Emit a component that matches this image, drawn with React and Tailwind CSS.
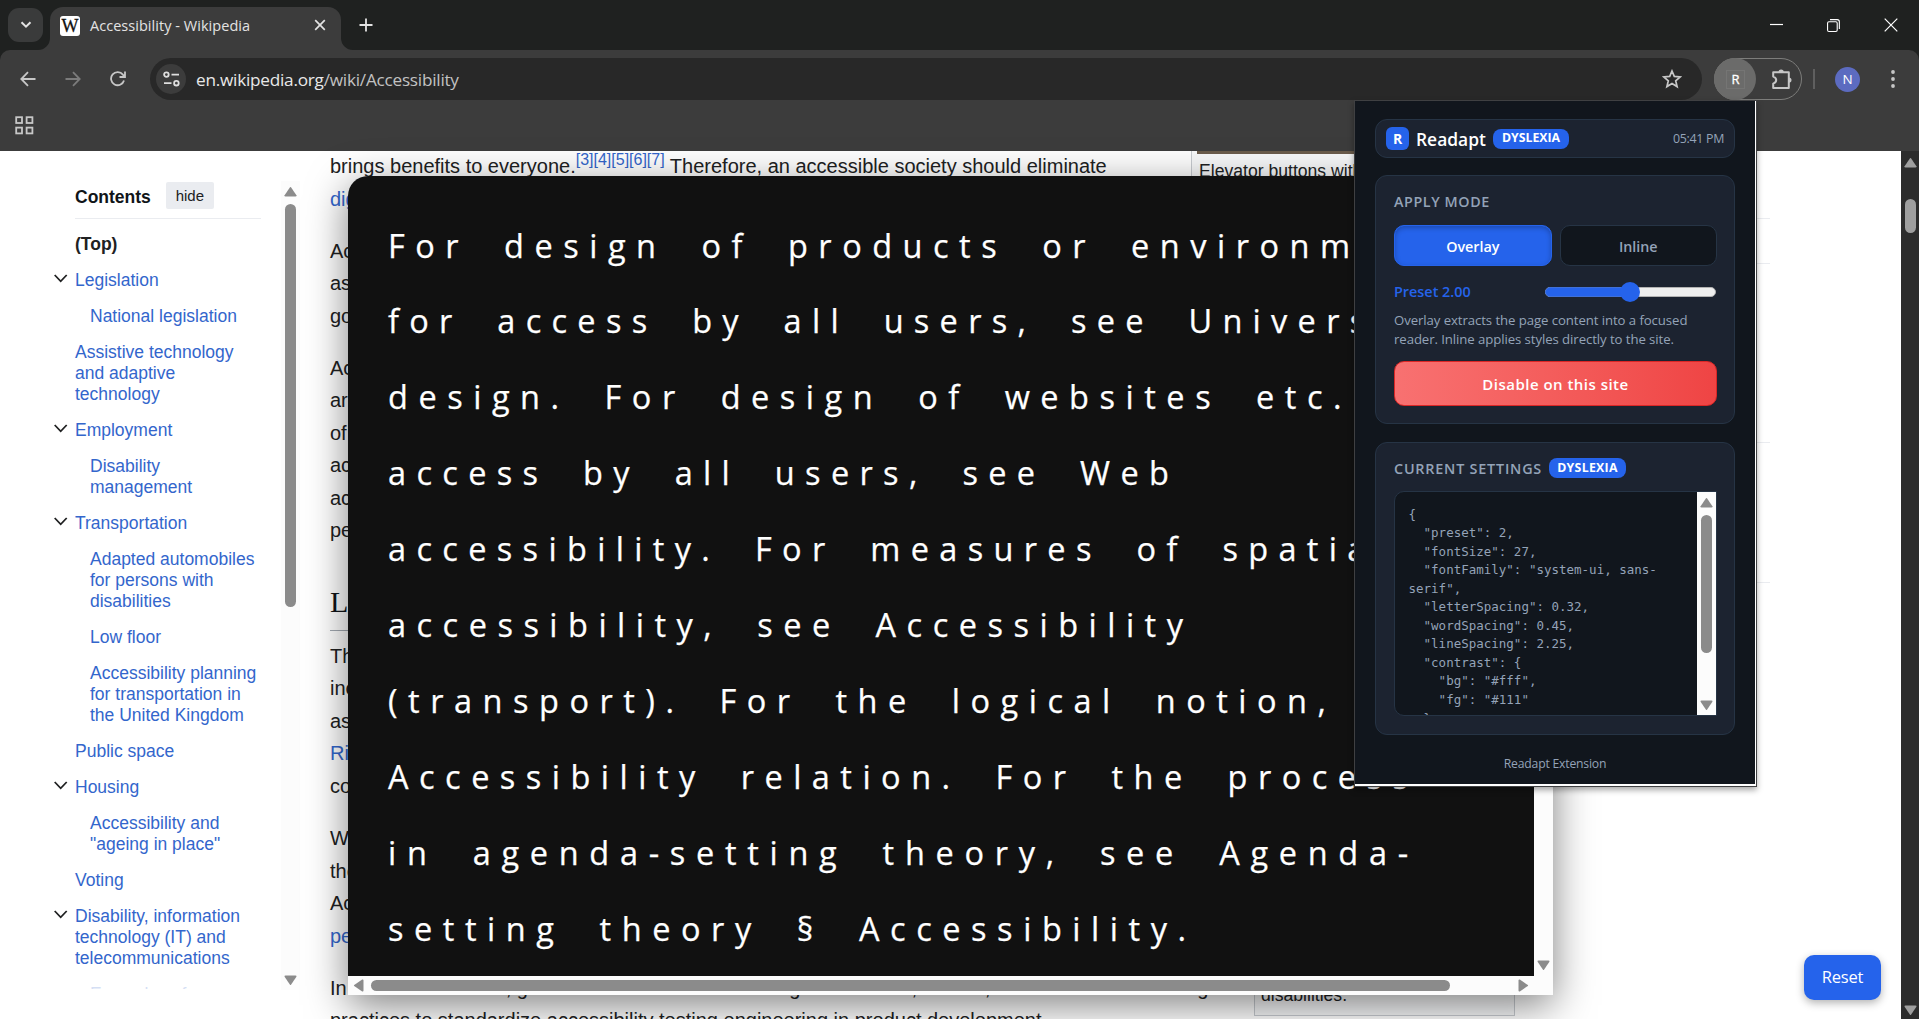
import React from "react";

const UI = "font-['Open_Sans','Noto_Sans',sans-serif]";
const ARIAL = "font-['Liberation_Sans',Arial,sans-serif]";

function Arrow({ dir, className = "" }) {
  const d = {
    up: "M7 2.2 L12.4 10.2 Q12.8 11.4 11.4 11.5 L1.6 11.5 Q.2 11.4 .6 10.2 L6 2.2 Q6.5 1.6 7 2.2Z",
    down: "M7 10.8 L12.4 2.8 Q12.8 1.6 11.4 1.5 L1.6 1.5 Q.2 1.6 .6 2.8 L6 10.8 Q6.5 11.4 7 10.8Z",
    left: "M2.2 6 L10.2 .6 Q11.4 .2 11.5 1.6 L11.5 11.4 Q11.4 12.8 10.2 12.4 L2.2 7 Q1.6 6.5 2.2 6Z",
    right: "M10.8 6 L2.8 .6 Q1.6 .2 1.5 1.6 L1.5 11.4 Q1.6 12.8 2.8 12.4 L10.8 7 Q11.4 6.5 10.8 6Z",
  }[dir];
  return (
    <svg viewBox="0 0 13 13" className={`size-[13px] shrink-0 ${className}`} fill="currentColor">
      <path d={d} />
    </svg>
  );
}

function TabStrip() {
  return (
    <div className="flex h-[50px] shrink-0 bg-[#1f2120] pl-2">
      <div className="mt-2 flex h-[34px] w-[35px] items-center justify-center rounded-[11px] bg-[#3a3b3b]">
        <svg viewBox="0 0 12 8" className="h-2 w-3" fill="none" stroke="#e3e3e3" strokeWidth="2">
          <path d="M1.5 1.2 L6 5.7 L10.5 1.2" />
        </svg>
      </div>
      <div className="relative ml-[7px] mt-[7px] flex h-[43px] w-[291px] items-center rounded-t-[13px] bg-[#3c3c3c] pb-[6px] pl-[10px]">
        <svg viewBox="0 0 12 12" className="absolute -left-3 bottom-0 size-3" fill="#3c3c3c">
          <path d="M12 0 V12 H0 A12 12 0 0 0 12 0Z" />
        </svg>
        <svg viewBox="0 0 12 12" className="absolute -right-3 bottom-0 size-3" fill="#3c3c3c">
          <path d="M0 0 V12 H12 A12 12 0 0 1 0 0Z" />
        </svg>
        <div className="flex size-5 items-center justify-center rounded-[3px] bg-white font-['Liberation_Serif',serif] text-[18px] leading-none text-[#111] [-webkit-text-stroke:0.3px_#111]">
          W
        </div>
        <span className={`ml-[10px] text-[14.5px] tracking-[0.04px] text-[#e3e3e3] ${UI}`}>Accessibility - Wikipedia</span>
        <svg viewBox="0 0 12 12" className="absolute left-[264px] top-[12px] size-3" stroke="#e3e3e3" strokeWidth="1.7">
          <path d="M1.2 1.2 L10.8 10.8 M10.8 1.2 L1.2 10.8" />
        </svg>
      </div>
      <svg viewBox="0 0 14 14" className="ml-[18px] mt-[18px] size-[14px]" stroke="#e3e3e3" strokeWidth="1.8">
        <path d="M7 .5 V13.5 M.5 7 H13.5" />
      </svg>
      <div className="ml-auto flex h-[50px] items-center gap-[44px] pr-[21px]">
        <svg viewBox="0 0 14 14" className="size-[14px]" stroke="#fff" strokeWidth="1.2">
          <path d="M1 6.5 H14" />
        </svg>
        <svg viewBox="0 0 14 14" className="size-[13px]" fill="none" stroke="#fff" strokeWidth="1.2">
          <rect x=".6" y="3" width="10.4" height="10.4" rx="1.5" />
          <path d="M3.2 .7 H11 Q13.3 .7 13.3 3 V10.8" />
        </svg>
        <svg viewBox="0 0 14 14" className="size-[14px]" stroke="#fff" strokeWidth="1.2">
          <path d="M.7 .7 L13.3 13.3 M13.3 .7 L.7 13.3" />
        </svg>
      </div>
    </div>
  );
}

function Toolbar() {
  return (
    <div className="h-[101px] shrink-0 bg-[#1f2120]">
      <div className="flex h-[101px] flex-col rounded-t-[10px] bg-[#3c3c3c]">
        <div className="flex h-[58px] items-center pl-5">
          <svg viewBox="0 0 16 16" className="size-4" fill="none" stroke="#c7c7c7" strokeWidth="1.8">
            <path d="M15.5 8 H1.5 M8 1.2 L1.3 8 L8 14.8" />
          </svg>
          <svg viewBox="0 0 16 16" className="ml-[29px] size-4" fill="none" stroke="#7b7b7b" strokeWidth="1.8">
            <path d="M.5 8 H14.5 M8 1.2 L14.7 8 L8 14.8" />
          </svg>
          <svg viewBox="0 0 16 16" className="ml-[29px] size-4" fill="none" stroke="#c7c7c7" strokeWidth="1.8">
            <path d="M14 9.5 A6.6 6.6 0 1 1 12.9 3.6 L14.6 5.6 M15 .5 V6 H9.5" />
          </svg>
          <div className="ml-6 flex h-[42px] w-[1552px] items-center rounded-full bg-[#282828] pl-1.5">
            <div className="flex size-[30px] items-center justify-center rounded-full bg-[#3c3c3c]">
              <svg viewBox="0 0 17 16" className="h-4 w-[17px]" fill="none" stroke="#dedede" strokeWidth="1.8">
                <circle cx="3.4" cy="3.6" r="2.3" />
                <path d="M8.5 3.6 H16 M1 12.2 H8.5" />
                <circle cx="13.4" cy="12.2" r="2.3" />
              </svg>
            </div>
            <span className={`ml-[10px] pt-[2px] text-[17.2px] tracking-[-0.24px] text-[#e8e8e8] ${UI}`}>
              en.wikipedia.org<span className="text-[#c2c2c2]">/wiki/Accessibility</span>
            </span>
            <svg viewBox="0 0 20 20" className="ml-auto mr-5 size-5" fill="none" stroke="#c7c7c7" strokeWidth="1.7">
              <path d="M10 2 L12.3 7.4 L18.2 7.9 L13.7 11.8 L15.1 17.6 L10 14.5 L4.9 17.6 L6.3 11.8 L1.8 7.9 L7.7 7.4Z" />
            </svg>
          </div>
          <div className="ml-3 flex h-[42px] w-[88px] items-center rounded-full border border-[#7d7d7b]">
            <div className={`-ml-px flex size-[42px] shrink-0 items-center justify-center rounded-full bg-[#6b6b6a] text-[13px] text-white ${UI}`}>
              <span className="ml-px flex size-[19px] items-center justify-center border border-[#757574] pt-px [-webkit-text-stroke:0.3px_white]">R</span>
            </div>
            <svg viewBox="0 0 22 22" className="ml-[15px] size-[22px]" fill="none" stroke="#c7c7c7" strokeWidth="2">
              <path d="M2.2 4.2 H17.8 V20 H2.2 V15.6 Q5.2 14.6 5.2 12.1 Q5.2 9.6 2.2 8.6Z" strokeLinejoin="round" />
              <path d="M7.4 4.2 A2.7 2.7 0 0 1 12.8 4.2Z M17.8 9.4 A2.7 2.7 0 0 1 17.8 14.8Z" fill="#c7c7c7" stroke="none" />
            </svg>
          </div>
          <div className="ml-[11px] h-5 w-[2px] bg-[#5f5f5f]" />
          <div className={`ml-5 flex size-[25px] items-center justify-center rounded-full bg-[#5c6bc0] text-[13.5px] text-white ${UI}`}>N</div>
          <svg viewBox="0 0 4 18" className="ml-[31px] h-[18px] w-1" fill="#c7c7c7">
            <circle cx="2" cy="2" r="1.9" />
            <circle cx="2" cy="9" r="1.9" />
            <circle cx="2" cy="16" r="1.9" />
          </svg>
        </div>
        <svg viewBox="0 0 19 19" className="ml-[15px] mt-2 size-[19px]" fill="none" stroke="#c7c7c7" strokeWidth="1.8">
          <rect x="1.2" y="1.2" width="5.8" height="5.8" />
          <rect x="11.6" y="1.2" width="5.8" height="5.8" />
          <rect x="1.2" y="11.6" width="5.8" height="5.8" />
          <rect x="11.6" y="11.6" width="5.8" height="5.8" />
        </svg>
      </div>
    </div>
  );
}

const TOC = [
  { t: ["Legislation"], open: true },
  { t: ["National legislation"], sub: true },
  { t: ["Assistive technology", "and adaptive", "technology"] },
  { t: ["Employment"], open: true },
  { t: ["Disability", "management"], sub: true },
  { t: ["Transportation"], open: true },
  { t: ["Adapted automobiles", "for persons with", "disabilities"], sub: true },
  { t: ["Low floor"], sub: true },
  { t: ["Accessibility planning", "for transportation in", "the United Kingdom"], sub: true },
  { t: ["Public space"] },
  { t: ["Housing"], open: true },
  { t: ["Accessibility and", "\"ageing in place\""], sub: true },
  { t: ["Voting"] },
  { t: ["Disability, information", "technology (IT) and", "telecommunications"], open: true },
  { t: ["Examples of"], sub: true, faded: true },
];

function Contents() {
  return (
    <div className="flex h-[839px] w-[300px] shrink-0 overflow-hidden pt-[30px]">
      <div className="h-[808px] w-[281px] overflow-hidden pl-[54px]">
        <div className="ml-[21px] flex h-[38px] w-[186px] items-start border-b border-[#eaecf0]">
          <span className="mt-[6px] text-[17.5px] leading-[21px] font-bold text-[#101418]">Contents</span>
          <span className="ml-[15px] mt-[1px] flex h-[27px] w-12 items-center justify-center rounded-[2px] bg-[#eaecf0] pt-px text-[15px] text-[#202122]">hide</span>
        </div>
        <div className="pt-[7px] text-[17.5px] leading-[21px] whitespace-nowrap text-[#3366cc]">
          <div className="py-[7.5px] pl-[21px] font-bold text-[#202122]">(Top)</div>
          {TOC.map((item, i) => (
            <div key={i} className="flex py-[7.5px]">
              <div className={item.sub ? "w-9 shrink-0" : "w-[21px] shrink-0"}>
                {item.open && (
                  <svg viewBox="0 0 14 9" className="mt-[4px] h-[9px] w-[14px]" fill="none" stroke="#202122" strokeWidth="1.8">
                    <path d="M.7 1 L6.7 7.3 L12.7 1" />
                  </svg>
                )}
              </div>
              <div className={item.faded ? "opacity-20" : ""}>
                {item.t.map((line) => (
                  <div key={line}>{line}</div>
                ))}
              </div>
            </div>
          ))}
        </div>
      </div>
      <div className="flex w-[19px] flex-col items-center bg-[#fcfcfc] text-[#8b8b8b]">
        <Arrow dir="up" className="mt-[4px]" />
        <div className="mt-[6px] h-[403px] w-[11px] rounded-full bg-[#8b8b8b]" />
        <Arrow dir="down" className="mt-auto mb-[3px]" />
      </div>
    </div>
  );
}

function Lines({ items, className = "" }) {
  return (
    <p className={`mb-[19.7px] ${className}`}>
      {items.map((l, i) => (
        <span key={i} className="block whitespace-nowrap">{l}</span>
      ))}
    </p>
  );
}

const Link = ({ children }) => <span className="text-[#3366cc]">{children}</span>;

function Article() {
  return (
    <div className="ml-[30px] w-[861px] shrink-0 text-[20px] leading-[32.5px] text-[#202122]">
      <Lines
        className="-mt-[1px]"
        items={[
          <>
            brings benefits to everyone.
            <span className="relative -top-[8px] text-[16px] leading-none text-[#3366cc]">[3][4][5][6][7]</span> Therefore, an
            accessible society should eliminate
          </>,
          <Link>digital divide</Link>,
        ]}
      />
      <Lines items={["Accessibility is strongly related to universal design", "as accessible as possible", "goods and services"]} />
      <Lines items={["Accessibility can be viewed", "are able to access", "of some system or entity", "access for people", "access to the web", "people"]} />
      <div className="mb-[9px] mt-[35px] h-[49px] border-b border-[#a2a9b1] font-['Liberation_Serif',serif] text-[30px] leading-[40px] text-[#101418]">
        Legislation
      </div>
      <Lines
        items={[
          "The disability rights movement advocates equal access",
          "includes not only physical access",
          "as non-disabled people",
          <Link>Rights of Persons with Disabilities</Link>,
          "commits signatories",
        ]}
      />
      <Lines items={["While it is often used to describe facilities", "the term can extend", "Accessible design", <Link>people</Link>]} />
      <Lines
        items={[
          "In the United States, government mandates including Section 508, WCAG, DDA are each enforcing",
          "practices to standardize accessibility testing engineering in product development.",
        ]}
      />
    </div>
  );
}

function Aside() {
  return (
    <div className="flex h-full w-[324px] shrink-0 flex-col items-end justify-between text-[17.6px] leading-[25px] text-[#202122]">
      <div className="h-[60px] w-[324px] border border-t-0 border-[#c8ccd1] bg-[#f8f9fa] px-[5px]">
        <div className="h-[3px] bg-[#6b5c4c]" />
        <div className="mt-[5px] pl-[2px] whitespace-nowrap">Elevator buttons with Braille</div>
      </div>
      <div className="mb-[3px] h-[60px] w-[261px] border border-t-0 border-[#c8ccd1] bg-[#f8f9fa] px-[6px] pt-[27px]">disabilities.</div>
    </div>
  );
}

const READER = [
  ["For design of products or environments", "tracking-[10.51px]"],
  ["for access by all users, see Universal", "tracking-[10.28px]"],
  ["design. For design of websites etc. for", "tracking-[10.52px]"],
  ["access by all users, see Web", "tracking-[10.32px]"],
  ["accessibility. For measures of spatial", "tracking-[10.33px]"],
  ["accessibility, see Accessibility", "tracking-[10.49px]"],
  ["(transport). For the logical notion, see", "tracking-[10.51px]"],
  ["Accessibility relation. For the process", "tracking-[10.48px]"],
  ["in agenda-setting theory, see Agenda-", "tracking-[10.7px]"],
  ["setting theory § Accessibility.", "tracking-[10.55px]"],
];

function Reader() {
  return (
    <div className="absolute left-[348px] top-[176px] flex h-[819px] w-[1205px] flex-col overflow-hidden rounded-tl-[20px] rounded-tr-[20px] bg-[#fcfcfc] shadow-[0_10px_40px_rgba(0,0,0,0.5)]">
      <div className="flex h-[800px]">
        <div className={`w-[1186px] overflow-hidden bg-[#111] pl-10 pt-[31.5px] text-[32.5px] leading-[75.94px] [word-spacing:16px] text-white [-webkit-text-stroke:0.25px_white] ${UI}`}>
          {READER.map(([t, c]) => (
            <div key={t} className={`whitespace-nowrap ${c}`}>{t}</div>
          ))}
        </div>
        <div className="flex w-[19px] flex-col items-center justify-end pb-[4px] text-[#8b8b8b]">
          <Arrow dir="down" />
        </div>
      </div>
      <div className="flex h-[19px] items-center pl-[4px] text-[#8b8b8b]">
        <Arrow dir="left" />
        <div className="ml-[6px] h-[11px] w-[1079px] rounded-full bg-[#8b8b8b]" />
        <Arrow dir="right" className="ml-[67px]" />
      </div>
    </div>
  );
}

function Badge({ className = "" }) {
  return (
    <span className={`flex h-5 items-center justify-center rounded-[8px] bg-[#2563eb] text-[12.3px] font-bold text-white ${className}`}>DYSLEXIA</span>
  );
}

const CODE = `{
  "preset": 2,
  "fontSize": 27,
  "fontFamily": "system-ui, sans-
serif",
  "letterSpacing": 0.32,
  "wordSpacing": 0.45,
  "lineSpacing": 2.25,
  "contrast": {
    "bg": "#fff",
    "fg": "#111"
  }
}`;

function Popup() {
  return (
    <div className="absolute left-[1354px] top-[100px] h-[687px] w-[403px] border border-[#3f4042] bg-white shadow-[0_3px_6px_rgba(0,0,0,0.35)]">
      <div className={`flex h-[683px] w-[400px] flex-col bg-[#11161d] px-5 pt-[18px] text-[#94a3b8] ${UI}`}>
        <div className="flex h-[39px] items-center rounded-[12px] border border-[#263445] bg-[#1c2330] pl-[10px] pr-[10px]">
          <span className="flex size-[23px] items-center justify-center rounded-[6px] bg-[#2563eb] text-[14px] font-bold text-white">R</span>
          <span className="ml-[7px] w-[69px] pt-[2px] text-[17.4px] font-semibold whitespace-nowrap text-white">Readapt</span>
          <Badge className="ml-[8px] w-[76px]" />
          <span className="ml-auto pt-[2px] text-[12.4px] tracking-[-0.3px]">05:41 PM</span>
        </div>

        <div className="mt-[17px] flex h-[249px] flex-col rounded-[12px] border border-[#263445] bg-[#1c2330] pl-[18px] pr-[17px] pt-[15px]">
          <div className="text-[14.3px] leading-[22px] font-semibold tracking-[0.6px]">APPLY MODE</div>
          <div className="mt-[12px] grid grid-cols-2 gap-2 text-[14.3px] font-semibold">
            <div className="flex h-[41px] items-center justify-center rounded-[10px] border border-[#2563eb] bg-[#2563eb] pt-[2px] text-white shadow-[inset_0_2px_5px_rgba(0,0,0,0.25)]">
              Overlay
            </div>
            <div className="flex h-[41px] items-center justify-center rounded-[10px] border border-[#263445] bg-[#11161d] pt-[2px]">Inline</div>
          </div>
          <div className="mt-[15px] flex h-[22px] items-center justify-between">
            <span className="text-[14.4px] font-semibold text-[#2563eb]">Preset 2.00</span>
            <div className="relative mr-[1px] h-[10px] w-[171px] overflow-visible rounded-full border border-[#b2b2b2] bg-[#efefef]">
              <div className="-ml-px -mt-px h-[10px] w-[86px] rounded-l-full border border-[#4070d8] bg-[#2563eb]" />
              <div className="absolute left-[74px] top-[-6px] size-5 rounded-full bg-[#2563eb]" />
            </div>
          </div>
          <div className="mt-[8px] text-[13.2px] leading-[19px] tracking-[-0.08px] whitespace-nowrap">
            Overlay extracts the page content into a focused
            <br />
            reader. Inline applies styles directly to the site.
          </div>
          <div className="mt-[12px] flex h-[45px] shrink-0 items-center justify-center rounded-[10px] border border-[#dc2626] bg-linear-to-r from-[#f87171] to-[#ef4444] pt-px text-[15px] font-semibold tracking-[0.48px] text-white">
            Disable on this site
          </div>
        </div>

        <div className="mt-[18px] flex h-[293px] flex-col rounded-[12px] border border-[#263445] bg-[#1c2330] pl-[18px] pr-[17px] pt-[15px]">
          <div className="flex h-5 items-center">
            <span className="w-[147px] pt-px text-[14.4px] font-semibold tracking-[0.78px] whitespace-nowrap">CURRENT SETTINGS</span>
            <Badge className="ml-[8px] w-[77px] tracking-[0.3px]" />
          </div>
          <div className="mt-[13px] flex h-[225px] overflow-hidden rounded-[10px] rounded-r-none border border-[#263445] bg-[#11161d]">
            <pre className="flex-1 overflow-hidden pl-[13.5px] pt-[13.5px] font-['DejaVu_Sans_Mono','Liberation_Mono',monospace] text-[12.5px] leading-[18.55px]">
              {CODE}
            </pre>
            <div className="flex w-[19px] flex-col items-center bg-[#fcfcfc] text-[#8b8b8b]">
              <Arrow dir="up" className="mt-[4px]" />
              <div className="mt-[6px] h-[138px] w-[11px] rounded-full bg-[#8b8b8b]" />
              <Arrow dir="down" className="mt-auto mb-[3px]" />
            </div>
          </div>
        </div>
        <div className="mt-[19px] text-center text-[12.2px] leading-5 tracking-[-0.2px]">Readapt Extension</div>
      </div>
    </div>
  );
}

export default function App() {
  return (
    <div className={`relative flex h-[1019px] w-[1919px] flex-col overflow-hidden bg-white ${ARIAL}`}>
      <TabStrip />
      <Toolbar />
      <div className="flex h-[868px] overflow-hidden">
        <Contents />
        <Article />
        <Aside />
        <div className="w-[255px] shrink-0 pt-[67px]">
          <div className="h-[45px] border-t border-[#eaecf0]" />
          <div className="h-[179px] border-t border-[#eaecf0]" />
          <div className="h-[141px] border-y border-[#eaecf0]" />
        </div>
        <div className="ml-auto flex w-[18px] shrink-0 flex-col items-center bg-[#2c2c2c] pt-[5px] text-[#9f9f9f]">
          <Arrow dir="up" />
          <div className="mt-[30px] h-[34px] w-[11px] rounded-full bg-[#9f9f9f]" />
          <Arrow dir="down" className="mb-[2px] mt-auto" />
        </div>
      </div>
      <Reader />
      <Popup />
      <div className={`absolute left-[1804px] top-[955px] flex h-[45px] w-[77px] items-center justify-center rounded-[10px] bg-[#2563eb] text-[16.5px] tracking-[-0.2px] text-white shadow-[0_3px_8px_rgba(0,0,0,0.3)] ${UI}`}>
        Reset
      </div>
    </div>
  );
}
